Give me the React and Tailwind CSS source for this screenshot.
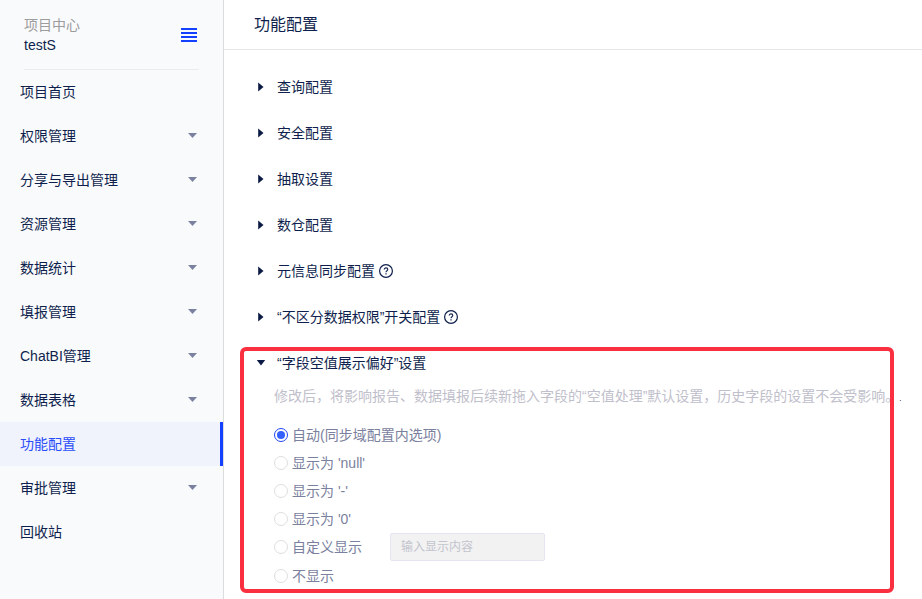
import React, { useState } from 'react';

const MENU = [
    { label: '项目首页' },
    { label: '权限管理', expandable: true },
    { label: '分享与导出管理', expandable: true },
    { label: '资源管理', expandable: true },
    { label: '数据统计', expandable: true },
    { label: '填报管理', expandable: true },
    { label: 'ChatBI管理', expandable: true },
    { label: '数据表格', expandable: true },
    { label: '功能配置', active: true },
    { label: '审批管理', expandable: true },
    { label: '回收站' },
];

const SECTIONS = [
    { label: '查询配置' },
    { label: '安全配置' },
    { label: '抽取设置' },
    { label: '数仓配置' },
    { label: '元信息同步配置', help: true },
    { label: '“不区分数据权限”开关配置', help: true },
];

const OPTIONS = [
    { value: 'auto', label: '自动(同步域配置内选项)' },
    { value: 'null', label: "显示为 'null'" },
    { value: 'dash', label: "显示为 '-'" },
    { value: 'zero', label: "显示为 '0'" },
    { value: 'custom', label: '自定义显示' },
    { value: 'hidden', label: '不显示' },
];

const HelpIcon = () => (
    <svg viewBox="0 0 14 14" className="h-3.5 w-3.5 shrink-0" fill="none" stroke="#0f1f4d" aria-hidden="true">
        <circle cx="7" cy="7" r="6.4" strokeWidth="1.2" />
        <path d="M5.2 5.6C5.2 4.5 6 3.9 7 3.9s1.8.6 1.8 1.6c0 1.2-1.8 1.3-1.8 2.7" strokeWidth="1.1" />
        <path d="M7 9.2v1.2" strokeWidth="1.2" />
    </svg>
);

const Sidebar = () => (
    <aside className="w-56 shrink-0 border-r border-[#dcdcdf] bg-[#f9fafc]">
        <div className="ml-6 mr-6 flex h-[70px] items-center justify-between border-b border-[#ebecee]">
            <div className="leading-5">
                <div className="text-[#9c9c9c]">项目中心</div>
                <div>testS</div>
            </div>
            <button type="button" aria-label="收起菜单" className="mr-0.5">
                <svg viewBox="0 0 16 14" className="h-3.5 w-4" fill="#1440ff" aria-hidden="true">
                    <path d="M0 0h16v2H0zM0 4h16v2H0zM0 8h16v2H0zM0 12h16v2H0z" />
                </svg>
            </button>
        </div>
        <nav>
            {MENU.map((item) => (
                <a
                    key={item.label}
                    href="#"
                    className={
                        item.active
                            ? 'flex h-11 items-center justify-between border-r-3 border-[#1440ff] bg-[#f0f2fc] pl-5 text-[#2a4dfa]'
                            : 'flex h-11 items-center justify-between pl-5 pr-[26px]'
                    }
                >
                    {item.label}
                    {item.expandable && (
                        <svg viewBox="0 0 9 7" className="h-[7px] w-[9px]" fill="#7a82a0" aria-hidden="true">
                            <path d="M0 0h9L4.5 5z" />
                        </svg>
                    )}
                </a>
            ))}
        </nav>
    </aside>
);

const SectionHeader = ({ label, help, open }) => (
    <button type="button" aria-expanded={!!open} className="flex h-[46px] items-center text-left">
        <svg viewBox="0 0 14 14" className="mr-[9px] h-3.5 w-3.5" fill="#0b1a45" aria-hidden="true">
            {open ? <path d="M2.8 4h8.4L7 9.5z" /> : <path d="M4.2 2.5v9l5.3-4.5z" />}
        </svg>
        <span className="mr-1">{label}</span>
        {help && <HelpIcon />}
    </button>
);

const NullDisplaySection = () => {
    const [selected, setSelected] = useState('auto');
    const [customText, setCustomText] = useState('');

    return (
        <section className="relative pb-2">
            <SectionHeader label="“字段空值展示偏好”设置" open />
            <div className="pl-5">
                <p className="mb-[15px] whitespace-nowrap leading-5 text-[#bfc0cb]">
                    修改后，将影响报告、数据填报后续新拖入字段的“空值处理”默认设置，历史字段的设置不会受影响。
                    <span className="text-[8px] leading-none text-black">.</span>
                </p>
                <div role="radiogroup" aria-label="字段空值展示偏好" className="text-[#7a809d]">
                    {OPTIONS.map((option) => (
                        <div key={option.value} className="flex min-h-7 items-center last:pt-px">
                            <label className="flex items-center gap-1">
                                <input
                                    type="radio"
                                    name="null-display"
                                    value={option.value}
                                    checked={selected === option.value}
                                    onChange={() => setSelected(option.value)}
                                    className="h-3.5 w-3.5 appearance-none rounded-full border border-[#dedede] bg-white checked:border-[#1f45f5] checked:bg-[#3360ff] checked:bg-clip-content checked:p-0.5"
                                />
                                {option.label}
                            </label>
                            {option.value === 'custom' && (
                                <input
                                    type="text"
                                    aria-label="自定义显示内容"
                                    placeholder="输入显示内容"
                                    value={customText}
                                    disabled={selected !== 'custom'}
                                    onChange={(e) => setCustomText(e.target.value)}
                                    className="ml-7 h-7 w-[155px] rounded-xs border border-[#e4e5f0] bg-[#f2f2f2] px-2.5 text-xs placeholder:text-[#c3c4ce]"
                                />
                            )}
                        </div>
                    ))}
                </div>
            </div>
            {/* highlight frame over the section */}
            <div className="pointer-events-none absolute -left-3.5 right-7 top-[7px] bottom-1 rounded-md border-4 border-[#fa2f40]" />
        </section>
    );
};

const App = () => (
    <div className="flex min-h-screen bg-white font-['Liberation_Sans','Noto_Sans_CJK_SC',sans-serif] text-sm text-[#0f1f4d]">
        <Sidebar />
        <main className="min-w-0 flex-1 overflow-x-clip">
            <header className="flex h-[50px] items-center border-b border-[#e6e6e8] pl-[30px]">
                <h1 className="text-base">功能配置</h1>
            </header>
            <div className="pl-[30px] pt-3.5">
                {SECTIONS.map((section) => (
                    <SectionHeader key={section.label} label={section.label} help={section.help} />
                ))}
            </div>
            <div className="pl-[30px]">
                <NullDisplaySection />
            </div>
        </main>
    </div>
);

export default App;
